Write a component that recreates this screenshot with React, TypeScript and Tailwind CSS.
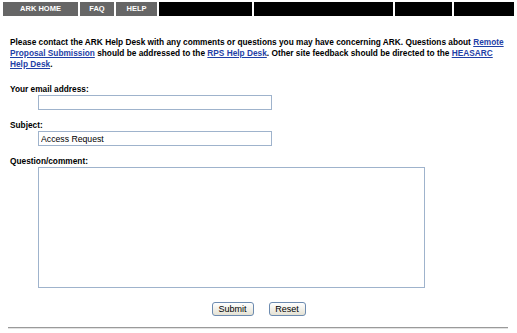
import React from "react";

const navCells = [
  { label: "ARK HOME", w: "w-[75px]", dark: false },
  { label: "FAQ", w: "w-[34px]", dark: false },
  { label: "HELP", w: "w-[41px]", dark: false },
  { label: "", w: "w-[93px]", dark: true },
  { label: "", w: "w-[139px]", dark: true },
  { label: "", w: "w-[57px]", dark: true },
  { label: "", w: "w-[60px]", dark: true },
];

function Link({ children }: { children: React.ReactNode }) {
  return <a href="#" className="text-[#1f3fa6] underline">{children}</a>;
}

export default function App() {
  return (
    <div className="w-[517px] h-[333px] bg-white font-['Liberation_Sans',Arial,sans-serif] text-black overflow-hidden">
      <div className="flex gap-[2px] ml-[3px] pt-[2px]">
        {navCells.map((c, i) => (
          <div
            key={i}
            className={`${c.w} h-[14px] flex items-center justify-center text-[7.5px] font-bold text-white ${
              c.dark ? "bg-black" : "bg-[#666666]"
            }`}
          >
            {c.label}
          </div>
        ))}
      </div>

      <p className="mt-[21px] ml-[10px] w-[497px] text-[8.3px] leading-[11px] font-bold">
        Please contact the ARK Help Desk with any comments or questions you may have concerning ARK. Questions about{" "}
        <Link>Remote Proposal Submission</Link> should be addressed to the <Link>RPS Help Desk</Link>. Other site feedback
        should be directed to the <Link>HEASARC Help Desk</Link>.
      </p>

      <form className="ml-[10px] text-[8.3px]">
        <label className="block mt-[14px] font-bold leading-[10px]">Your email address:</label>
        <input
          type="text"
          className="block ml-[28px] mt-[1px] w-[234px] h-[15px] border border-[#9fb3cc] px-[2px] text-[8.7px] outline-none"
        />

        <label className="block mt-[10px] font-bold leading-[10px]">Subject:</label>
        <input
          type="text"
          defaultValue="Access Request"
          className="block ml-[28px] mt-[1px] w-[234px] h-[15px] border border-[#9fb3cc] px-[2px] text-[8.7px] outline-none"
        />

        <label className="block mt-[10px] font-bold leading-[10px]">Question/comment:</label>
        <textarea className="block ml-[28px] mt-[1px] w-[387px] h-[121px] border border-[#9fb3cc] resize-none outline-none" />

        <div className="flex justify-center gap-[15px] mt-[14px] -ml-[10px]">
          <button
            type="button"
            className="w-[42px] h-[14px] rounded-[3px] border border-[#6d8bb0] bg-gradient-to-b from-white to-[#e4e1d4] text-[9px] leading-none"
          >
            Submit
          </button>
          <button
            type="button"
            className="w-[37px] h-[14px] rounded-[3px] border border-[#6d8bb0] bg-gradient-to-b from-white to-[#e4e1d4] text-[9px] leading-none"
          >
            Reset
          </button>
        </div>
      </form>

      <div className="mt-[11px] ml-[8px] w-[500px] border-t border-[#9a9a9a] border-b border-b-[#e2e2e2]" />
    </div>
  );
}
